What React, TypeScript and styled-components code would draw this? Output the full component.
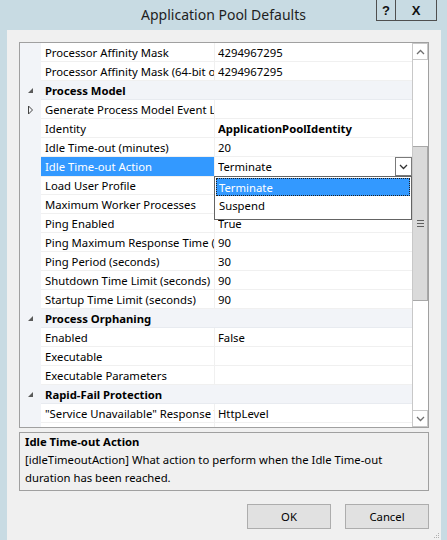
import React from "react";
import styled, { createGlobalStyle } from "styled-components";

const Global = createGlobalStyle`
  html, body { margin: 0; padding: 0; background: #c8dbe3; }
  body { font-family: "Noto Sans", "Liberation Sans", sans-serif; font-size: 11.3px; color: #000; }
  * { box-sizing: border-box; }
`;

const Window = styled.div`
  width: 447px;
  height: 540px;
  background: #c8dbe3;
  display: flex;
  flex-direction: column;
  overflow: hidden;
`;

const TitleBar = styled.div`
  height: 30px;
  flex: none;
  display: grid;
  grid-template-columns: 1fr auto 1fr;
`;

const Title = styled.div`
  grid-column: 2;
  font-size: 14px;
  line-height: 29px;
  color: #1e1e1e;
  padding-left: 0px;
`;

const CaptionButtons = styled.div`
  grid-column: 3;
  justify-self: end;
  align-self: start;
  display: flex;
  margin-right: 10px;
  margin-top: -1px;
`;

const CaptionButton = styled.div<{ $w: number }>`
  width: ${(p) => p.$w}px;
  height: 22px;
  border: 1px solid #4f4f4f;
  margin-left: -1px;
  display: flex;
  align-items: center;
  justify-content: center;
  font-family: "Liberation Sans", sans-serif;
  font-weight: bold;
  font-size: 13px;
  color: #111;
  padding-top: 1px;
`;

const Client = styled.div`
  flex: 1;
  margin: 0 6px 0 7px;
  background: #f0f0f0;
  padding: 12px 12px 0 12px;
  display: flex;
  flex-direction: column;
  position: relative;
`;

const Grid = styled.div`
  height: 386px;
  border: 1px solid #a0a0a0;
  display: flex;
  background: #fff;
`;

const GridBody = styled.div`
  flex: 1;
  overflow: hidden;
  position: relative;
`;

const Row = styled.div<{ $cat?: boolean }>`
  display: grid;
  grid-template-columns: 21px 174px 1fr;
  height: 19px;
  background: ${(p) => (p.$cat ? "#f2f4f8" : "#fff")};
`;

const Gutter = styled.div`
  background: #f2f4f8;
  display: flex;
  align-items: center;
  justify-content: center;
`;

const NameCell = styled.div<{ $sel?: boolean }>`
  padding: 1px 0 0 4px;
  white-space: nowrap;
  overflow: hidden;
  line-height: 17px;
  border-bottom: 1px solid #f0f0f0;
  border-right: 1px solid #f0f0f0;
  background: ${(p) => (p.$sel ? "#3399ff" : "transparent")};
  color: ${(p) => (p.$sel ? "#fff" : "#000")};
`;

const CatCell = styled.div`
  grid-column: 2 / 4;
  padding: 1px 0 0 4px;
  font-weight: bold;
  line-height: 17px;
  white-space: nowrap;
  border-bottom: 1px solid #e8ebf0;
`;

const ValueCell = styled.div<{ $bold?: boolean; $editing?: boolean }>`
  padding: 1px 0 0 3px;
  white-space: nowrap;
  overflow: ${(p) => (p.$editing ? "visible" : "hidden")};
  line-height: 17px;
  border-bottom: 1px solid #f0f0f0;
  font-weight: ${(p) => (p.$bold ? "bold" : "normal")};
  position: relative;
  display: flex;
  z-index: ${(p) => (p.$editing ? 2 : "auto")};
`;

const ValueText = styled.span`
  flex: 1;
  overflow: hidden;
`;

const ComboButton = styled.div`
  width: 17px;
  height: 19px;
  margin-top: -1px;
  border: 1px solid #7a7a7a;
  background: #fff;
  display: flex;
  align-items: center;
  justify-content: center;
`;

const DropList = styled.div`
  position: absolute;
  top: 19px;
  left: -1px;
  width: 198px;
  border: 1px solid #646464;
  background: #fff;
  padding: 1px 1px 5px 1px;
`;

const DropItem = styled.div<{ $active?: boolean }>`
  height: 18px;
  line-height: 17px;
  padding-left: 2px;
  background: ${(p) => (p.$active ? "#3399ff" : "transparent")};
  color: ${(p) => (p.$active ? "#fff" : "#000")};
  border: 1px ${(p) => (p.$active ? "dotted #202020" : "solid transparent")};
`;

const ScrollBar = styled.div`
  width: 16px;
  flex: none;
  display: flex;
  flex-direction: column;
  border-left: 1px solid #c8c8c8;
  background: #fff;
`;

const ArrowBox = styled.div`
  height: 17px;
  border: 1px solid #c8c8c8;
  border-left: none;
  display: flex;
  align-items: center;
  justify-content: center;
  background: #fff;
`;

const Track = styled.div`
  flex: 1;
  padding-top: 86px;
`;

const Thumb = styled.div`
  height: 155px;
  background: #dadada;
  border: 1px solid #a8a8a8;
  border-left: none;
  display: flex;
  align-items: center;
  justify-content: center;
`;

const Description = styled.div`
  margin-top: 4px;
  height: 59px;
  border: 1px solid #a0a0a0;
  background: #f0f0f0;
  padding: 0 5px;
  line-height: 18px;
`;

const DescTitle = styled.div`
  font-weight: bold;
`;

const ButtonRow = styled.div`
  margin-top: 13px;
  display: flex;
  justify-content: flex-end;
  gap: 14px;
`;

const DialogButton = styled.button`
  width: 84px;
  height: 25px;
  background: #e1e1e1;
  border: 1px solid #adadad;
  font-family: "Noto Sans", "Liberation Sans", sans-serif;
  font-size: 11.3px;
  color: #000;
  padding: 0;
`;

const Grip = styled.svg`
  position: absolute;
  right: 1px;
  bottom: 1px;
`;

type Item =
  | { kind: "cat"; label: string }
  | { kind: "prop"; name: string; value?: string; bold?: boolean; expander?: boolean; selected?: boolean };

const rows: Item[] = [
  { kind: "prop", name: "Processor Affinity Mask", value: "4294967295" },
  { kind: "prop", name: "Processor Affinity Mask (64-bit option)", value: "4294967295" },
  { kind: "cat", label: "Process Model" },
  { kind: "prop", name: "Generate Process Model Event Log Entry", expander: true },
  { kind: "prop", name: "Identity", value: "ApplicationPoolIdentity", bold: true },
  { kind: "prop", name: "Idle Time-out (minutes)", value: "20" },
  { kind: "prop", name: "Idle Time-out Action", value: "Terminate", selected: true },
  { kind: "prop", name: "Load User Profile", value: "True" },
  { kind: "prop", name: "Maximum Worker Processes", value: "1" },
  { kind: "prop", name: "Ping Enabled", value: "True" },
  { kind: "prop", name: "Ping Maximum Response Time (seconds)", value: "90" },
  { kind: "prop", name: "Ping Period (seconds)", value: "30" },
  { kind: "prop", name: "Shutdown Time Limit (seconds)", value: "90" },
  { kind: "prop", name: "Startup Time Limit (seconds)", value: "90" },
  { kind: "cat", label: "Process Orphaning" },
  { kind: "prop", name: "Enabled", value: "False" },
  { kind: "prop", name: "Executable" },
  { kind: "prop", name: "Executable Parameters" },
  { kind: "cat", label: "Rapid-Fail Protection" },
  { kind: "prop", name: "\"Service Unavailable\" Response Type", value: "HttpLevel" },
  { kind: "prop", name: "Failure Interval (minutes)", value: "5" },
];

const Collapse = () => (
  <svg width="7" height="7" viewBox="0 0 7 7">
    <polygon points="6,1 6,6 1,6" fill="#5a5a5a" />
  </svg>
);

const Expand = () => (
  <svg width="7" height="10" viewBox="0 0 7 10">
    <polygon points="1.5,1 5.5,5 1.5,9" fill="none" stroke="#444" strokeWidth="1" />
  </svg>
);

const Chevron = ({ up, color = "#6f6f6f" }: { up?: boolean; color?: string }) => (
  <svg width="9" height="6" viewBox="0 0 9 6">
    <polyline
      points={up ? "1,5 4.5,1.5 8,5" : "1,1 4.5,4.5 8,1"}
      fill="none"
      stroke={color}
      strokeWidth="1.3"
    />
  </svg>
);

const GripLines = () => (
  <svg width="7" height="7" viewBox="0 0 7 7">
    <rect x="0" y="0" width="7" height="1" fill="#606060" />
    <rect x="0" y="3" width="7" height="1" fill="#606060" />
    <rect x="0" y="6" width="7" height="1" fill="#606060" />
  </svg>
);

export default function App() {
  return (
    <>
      <Global />
      <Window>
        <TitleBar>
          <Title>Application Pool Defaults</Title>
          <CaptionButtons>
            <CaptionButton $w={20}>?</CaptionButton>
            <CaptionButton $w={42}>X</CaptionButton>
          </CaptionButtons>
        </TitleBar>
        <Client>
          <Grid>
            <GridBody>
              {rows.map((r, i) =>
                r.kind === "cat" ? (
                  <Row key={i} $cat>
                    <Gutter>
                      <Collapse />
                    </Gutter>
                    <CatCell>{r.label}</CatCell>
                  </Row>
                ) : (
                  <Row key={i}>
                    <Gutter>{r.expander ? <Expand /> : null}</Gutter>
                    <NameCell $sel={r.selected}>{r.name}</NameCell>
                    <ValueCell $bold={r.bold} $editing={r.selected}>
                      <ValueText>{r.value ?? ""}</ValueText>
                      {r.selected && (
                        <>
                          <ComboButton>
                            <Chevron color="#333" />
                          </ComboButton>
                          <DropList>
                            <DropItem $active>Terminate</DropItem>
                            <DropItem>Suspend</DropItem>
                          </DropList>
                        </>
                      )}
                    </ValueCell>
                  </Row>
                )
              )}
            </GridBody>
            <ScrollBar>
              <ArrowBox>
                <Chevron up />
              </ArrowBox>
              <Track>
                <Thumb>
                  <GripLines />
                </Thumb>
              </Track>
              <ArrowBox>
                <Chevron />
              </ArrowBox>
            </ScrollBar>
          </Grid>
          <Description>
            <DescTitle>Idle Time-out Action</DescTitle>
            <div>
              [idleTimeoutAction] What action to perform when the Idle Time-out
              <br />
              duration has been reached.
            </div>
          </Description>
          <ButtonRow>
            <DialogButton>OK</DialogButton>
            <DialogButton>Cancel</DialogButton>
          </ButtonRow>
          <Grip width="8" height="8" viewBox="0 0 8 8">
            <rect x="6" y="2" width="1" height="1" fill="#b0b0b0" />
            <rect x="4" y="4" width="1" height="1" fill="#b0b0b0" />
            <rect x="6" y="4" width="1" height="1" fill="#b0b0b0" />
            <rect x="2" y="6" width="1" height="1" fill="#b0b0b0" />
            <rect x="4" y="6" width="1" height="1" fill="#b0b0b0" />
            <rect x="6" y="6" width="1" height="1" fill="#b0b0b0" />
          </Grip>
        </Client>
      </Window>
    </>
  );
}
